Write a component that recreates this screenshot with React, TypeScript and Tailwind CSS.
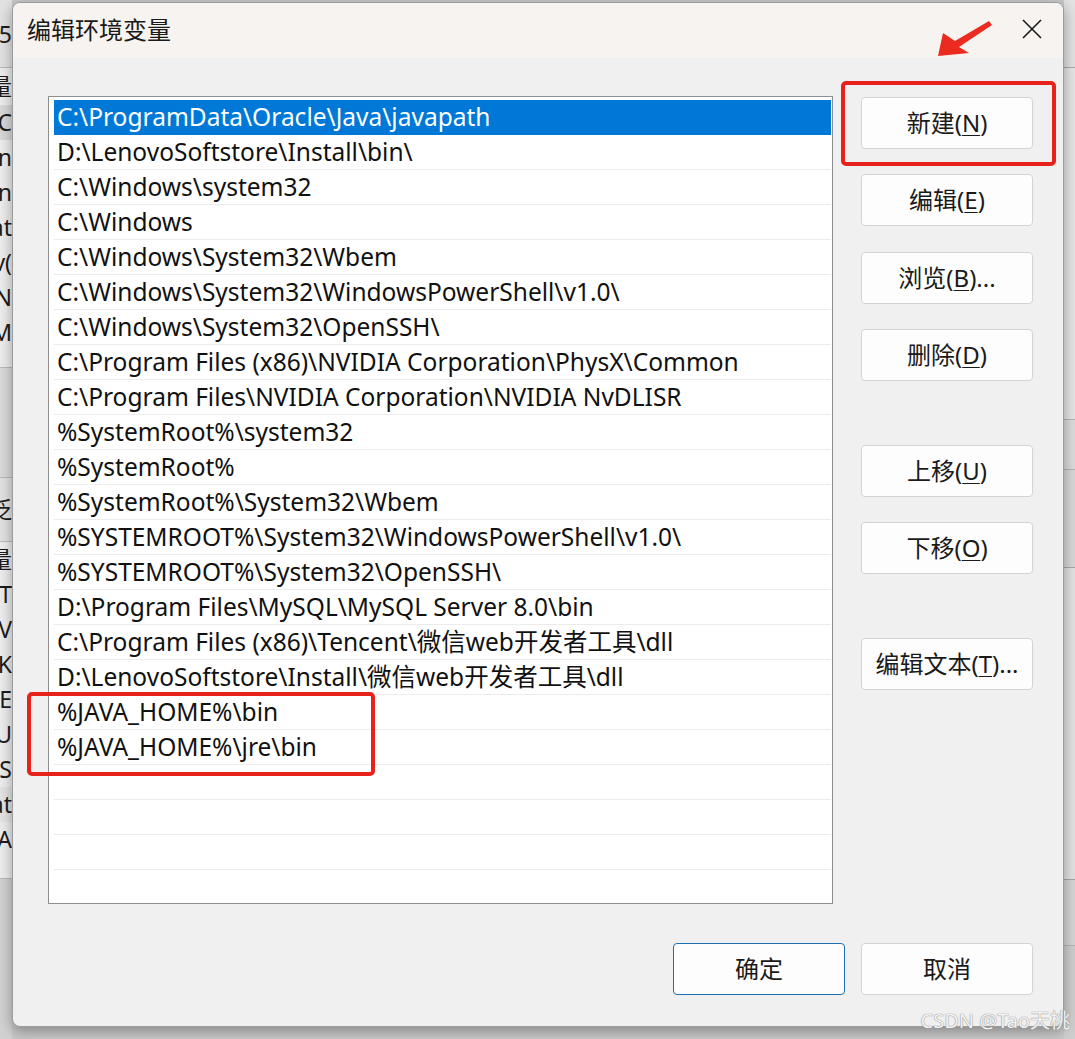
import React from "react";

const FONT = { fontFamily: '"Noto Sans", "Noto Sans CJK SC", sans-serif' };

const paths = [
  "C:\\ProgramData\\Oracle\\Java\\javapath",
  "D:\\LenovoSoftstore\\Install\\bin\\",
  "C:\\Windows\\system32",
  "C:\\Windows",
  "C:\\Windows\\System32\\Wbem",
  "C:\\Windows\\System32\\WindowsPowerShell\\v1.0\\",
  "C:\\Windows\\System32\\OpenSSH\\",
  "C:\\Program Files (x86)\\NVIDIA Corporation\\PhysX\\Common",
  "C:\\Program Files\\NVIDIA Corporation\\NVIDIA NvDLISR",
  "%SystemRoot%\\system32",
  "%SystemRoot%",
  "%SystemRoot%\\System32\\Wbem",
  "%SYSTEMROOT%\\System32\\WindowsPowerShell\\v1.0\\",
  "%SYSTEMROOT%\\System32\\OpenSSH\\",
  "D:\\Program Files\\MySQL\\MySQL Server 8.0\\bin",
  "C:\\Program Files (x86)\\Tencent\\微信web开发者工具\\dll",
  "D:\\LenovoSoftstore\\Install\\微信web开发者工具\\dll",
  "%JAVA_HOME%\\bin",
  "%JAVA_HOME%\\jre\\bin",
  "",
  "",
  "",
  "",
];

function Btn({
  label,
  mn,
  suffix = "",
  primary = false,
}: {
  label: string;
  mn: string;
  suffix?: string;
  primary?: boolean;
}) {
  return (
    <div
      className={`w-[172px] h-[52px] rounded-[4px] bg-[#fdfdfd] flex items-center justify-center text-[24px] text-[#1a1a1a] border ${
        primary ? "border-[#1f6fb0]" : "border-[#d3d3d3]"
      }`}
    >
      {label}
      {mn && (
        <>
          (<span className="underline underline-offset-[3px] decoration-1">{mn}</span>)
        </>
      )}
      {suffix}
    </div>
  );
}

function BgRow({ t, h = 35, cls = "" }: { t: string; h?: number; cls?: string }) {
  return (
    <div
      className={`flex justify-end items-center overflow-hidden whitespace-nowrap text-[23px] text-[#1c1c1c] ${cls}`}
      style={{ height: h }}
    >
      {t}
    </div>
  );
}

export default function App() {
  return (
    <div
      className="relative w-[1075px] h-[1039px] overflow-hidden bg-[#c9c9c9]"
      style={FONT}
    >
      {/* background window (left strip) */}
      <div className="flex flex-col w-[12px] h-full bg-[#e4e4e4]">
        <BgRow t="5" h={68} cls="bg-[#e2e2e2] border-b border-[#b9b9b9] pt-[2px]" />
        <BgRow t="变量" h={37} cls="bg-[#ededed]" />
        <BgRow t="C" cls="bg-[#d8d8d8]" />
        <BgRow t="n" cls="bg-[#ededed]" />
        <BgRow t="n" cls="bg-[#ededed]" />
        <BgRow t="at" cls="bg-[#ededed]" />
        <BgRow t="v(" cls="bg-[#ededed]" />
        <BgRow t="EN" cls="bg-[#ededed]" />
        <BgRow t="M" cls="bg-[#ededed]" />
        <BgRow t="" h={18} cls="bg-[#ededed] border-b border-[#b9b9b9]" />
        <BgRow t="" h={110} cls="bg-[#dadada] border-b border-[#b9b9b9]" />
        <BgRow t="泛" h={64} cls="bg-[#e2e2e2] border-b border-[#b9b9b9]" />
        <BgRow t="变量" cls="bg-[#ededed]" />
        <BgRow t="ET" cls="bg-[#ededed]" />
        <BgRow t="V" cls="bg-[#ededed]" />
        <BgRow t="IK" cls="bg-[#ededed]" />
        <BgRow t="IE" cls="bg-[#ededed]" />
        <BgRow t="U" cls="bg-[#ededed]" />
        <BgRow t="S" cls="bg-[#ededed]" />
        <BgRow t="at" cls="bg-[#e4e4e4]" />
        <BgRow t="A" cls="bg-[#ededed]" />
        <BgRow t="" h={22} cls="bg-[#ededed] border-b border-[#b9b9b9]" />
        <div className="flex-1 bg-[#d2d2d2]" />
      </div>

      {/* background window (right strip) */}
      <div className="absolute right-0 top-0 w-[11px] h-full flex flex-col bg-[#dadada]">
        <div className="h-[68px] bg-[#e2e2e2] border-b border-[#aaaaaa]" />
        <div className="h-[352px] bg-[#e6e6e6] border-b border-[#b5b5b5]" />
        <div className="h-[50px] bg-[#dcdcdc] border-b border-[#b5b5b5]" />
        <div className="h-[98px] bg-[#d8d8d8] border-b border-[#a8a8a8]" />
        <div className="h-[312px] bg-[#e2e2e2] border-b border-[#a8a8a8]" />
        <div className="h-[66px] bg-[#d6d6d6] border-b border-[#b5b5b5]" />
        <div className="flex-1 bg-[#cfcfcf]" />
      </div>

      {/* dialog window */}
      <div className="absolute left-[12px] top-[2px] w-[1052px] h-[1025px] rounded-[8px] border border-[#9c9c9c] bg-[#f0f0f0] shadow-[0_4px_14px_rgba(0,0,0,0.35)] flex flex-col overflow-hidden">
        {/* title bar */}
        <div className="h-[55px] bg-[#f7f3f0] flex items-center justify-between pl-[14px] pr-[20px] shrink-0">
          <div className="text-[24px] text-[#1a1a1a] -mt-[2px]">编辑环境变量</div>
          <svg width="22" height="22" viewBox="0 0 22 22" className="-mt-[4px]">
            <path d="M2 2 L20 20 M20 2 L2 20" stroke="#1a1a1a" strokeWidth="1.6" fill="none" />
          </svg>
        </div>

        {/* body */}
        <div className="flex-1 flex flex-col pl-[35px] pr-[30px] pt-[38px] pb-[31px]">
          <div className="flex gap-[28px]">
            {/* list */}
            <div className="w-[785px] h-[808px] bg-white border border-[#8e8e8e] pl-[5px] pr-[1px] pt-[3px] overflow-hidden">
              {paths.map((p, i) => (
                <div
                  key={i}
                  className={`h-[35px] flex items-center pl-[3px] text-[24.5px] whitespace-nowrap ${
                    i === 0
                      ? "bg-[#0078d7] text-white"
                      : "text-[#111] border-b border-[#ececec]"
                  }`}
                >
                  {p}
                </div>
              ))}
            </div>

            {/* buttons column */}
            <div className="flex flex-col pt-[1px]">
              <Btn label="新建" mn="N" />
              <div className="h-[25px]" />
              <Btn label="编辑" mn="E" />
              <div className="h-[26px]" />
              <Btn label="浏览" mn="B" suffix="..." />
              <div className="h-[25px]" />
              <Btn label="删除" mn="D" />
              <div className="h-[64px]" />
              <Btn label="上移" mn="U" />
              <div className="h-[25px]" />
              <Btn label="下移" mn="O" />
              <div className="h-[64px]" />
              <Btn label="编辑文本" mn="T" suffix="..." />
            </div>
          </div>

          <div className="flex-1" />
          <div className="flex justify-end gap-[16px]">
            <Btn label="确定" mn="" primary />
            <Btn label="取消" mn="" />
          </div>
        </div>
      </div>

      {/* red annotation boxes */}
      <div className="absolute left-[841px] top-[81px] w-[215px] h-[85px] border-[4px] border-[#e8221b] rounded-[5px]" />
      <div className="absolute left-[27px] top-[692px] w-[348px] h-[84px] border-[4px] border-[#e8221b] rounded-[5px]" />

      {/* red arrow */}
      <svg className="absolute left-[930px] top-[15px]" width="70" height="50" viewBox="930 15 70 50">
        <polygon
          points="938,56 943,33 955,41 989,21 992,25 959,47 969,53"
          fill="#ec2a1f"
        />
      </svg>

      {/* watermark */}
      <div
        className="absolute right-[5px] top-[1006px] text-[20px] text-white/90 whitespace-nowrap"
        style={{ textShadow: "0 0 1px #888, 0 0 1px #888" }}
      >
        CSDN @Tao天桃
      </div>
    </div>
  );
}
